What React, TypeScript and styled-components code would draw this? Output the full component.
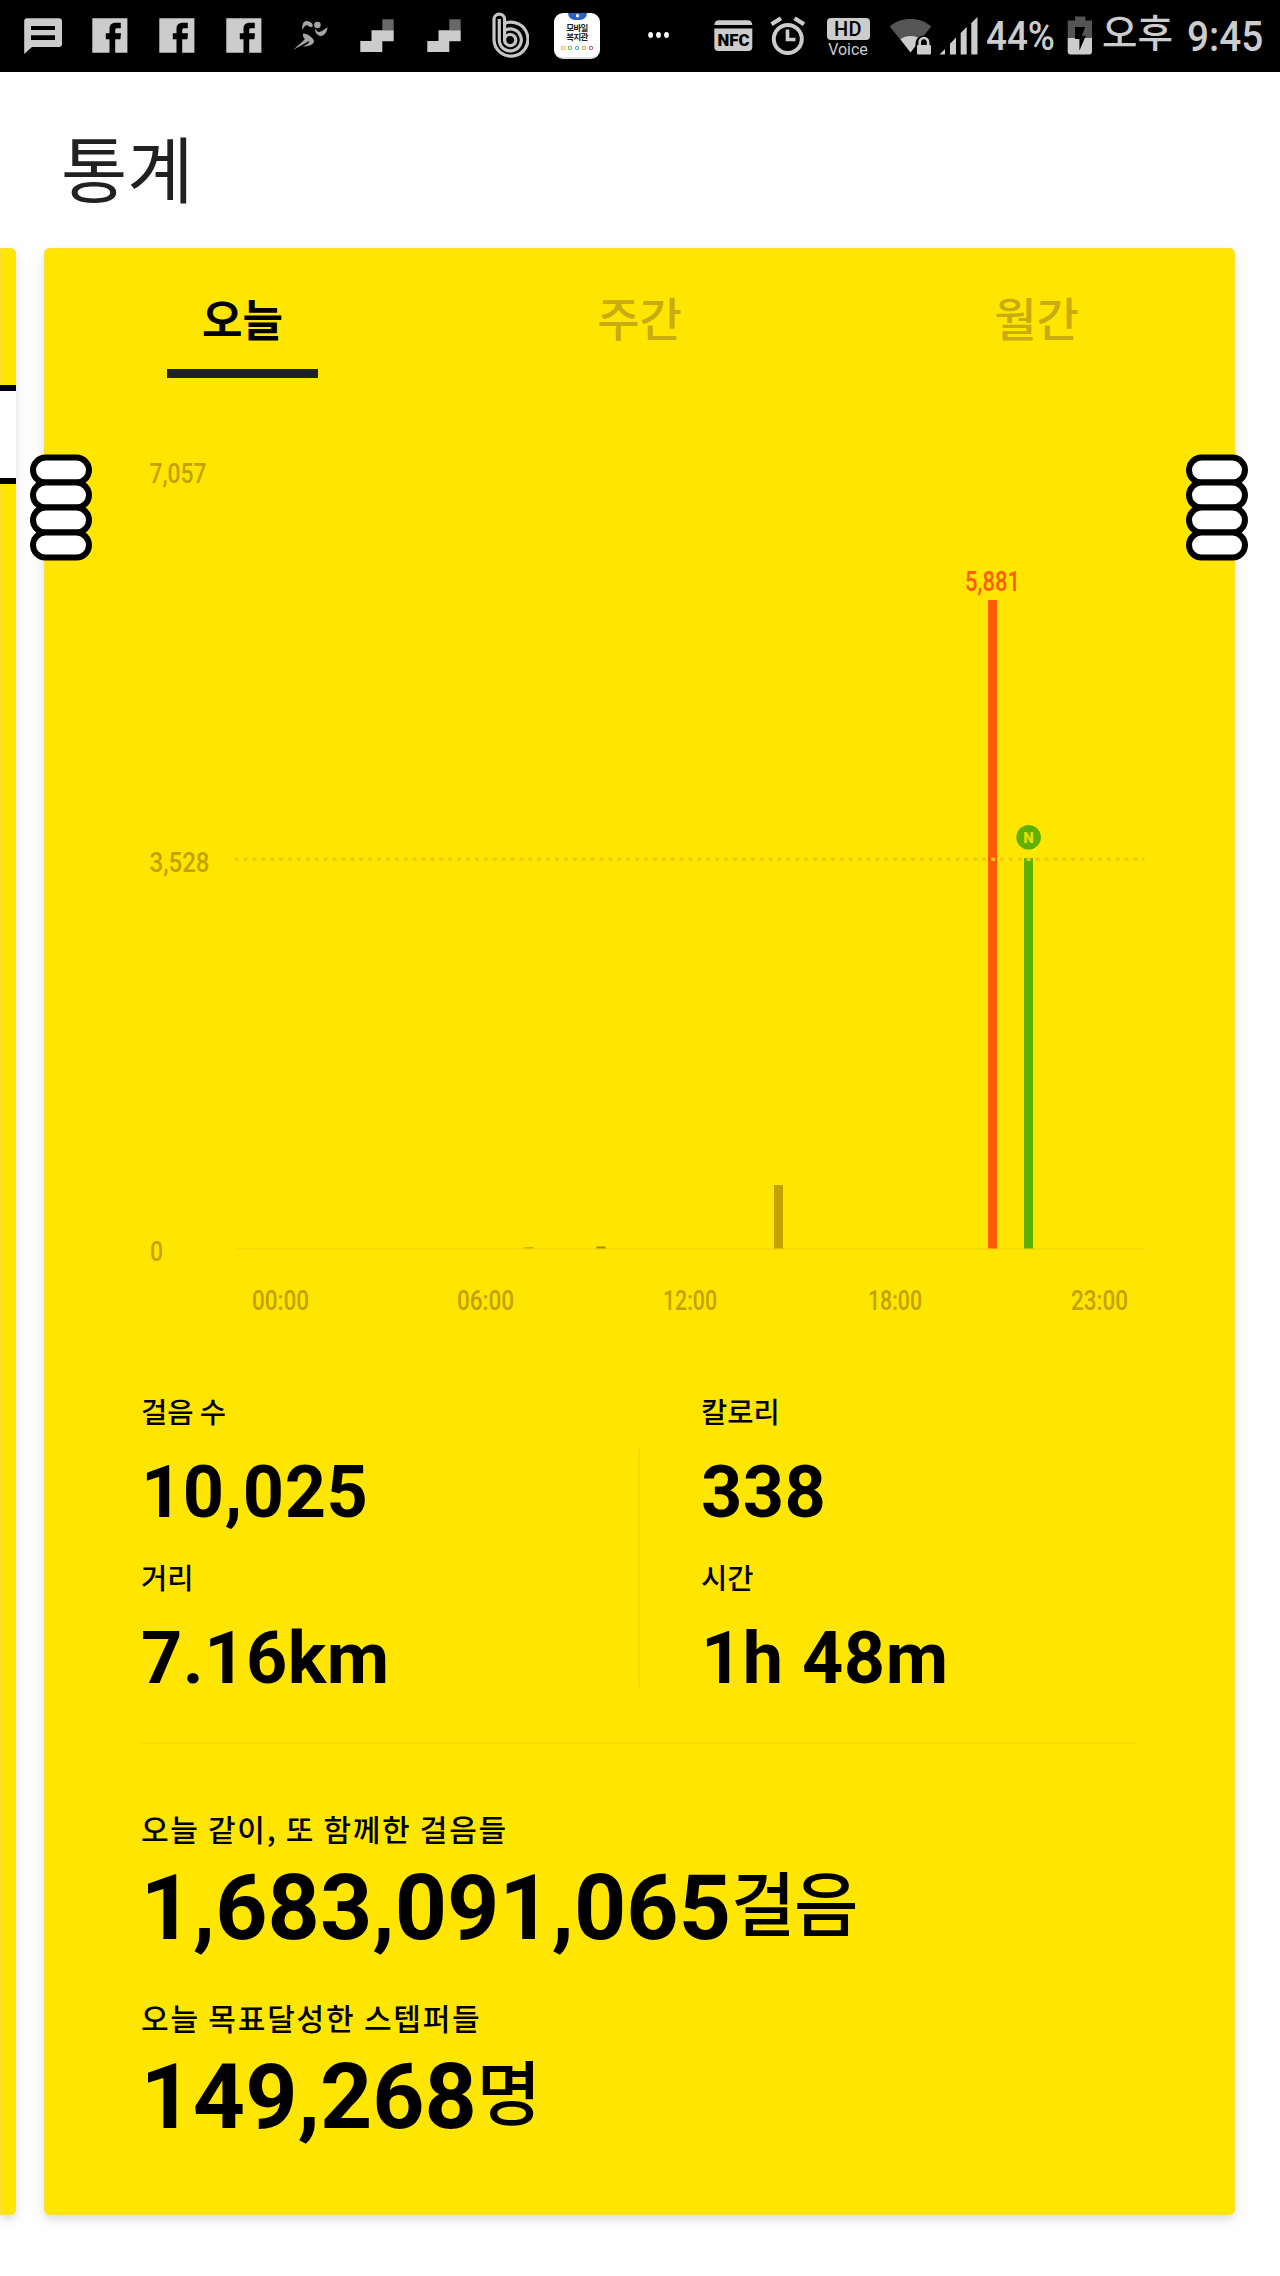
import React from 'react';
import styled, { createGlobalStyle } from 'styled-components';

const KR = '"Noto Sans CJK KR", sans-serif';
const LATIN = 'Roboto, "Noto Sans CJK KR", sans-serif';
const YELLOW = '#ffe600';
const OCHRE = '#c3a100';
const SILVER = '#cccccc';

const GlobalStyle = createGlobalStyle`
  html, body { margin: 0; padding: 0; background: #fefefe; }
  * { box-sizing: border-box; }
`;

const Page = styled.div`
  width: 1280px;
  height: 2276px;
  display: flex;
  flex-direction: column;
  overflow: hidden;
  background: #fefefe;
  font-family: ${KR};
  color: #000;
`;

const StatusBar = styled.header`
  height: 72px;
  flex: none;
  display: flex;
  align-items: flex-start;
  background: #000;
  color: ${SILVER};
`;

const Icon = styled.svg<{ $gap: number }>`
  display: block;
  flex: none;
  margin-left: ${(p) => p.$gap}px;
`;

const StatusText = styled.span<{ $gap: number; $w: number; $size: number; $squeeze: number; $top: number }>`
  flex: none;
  width: ${(p) => p.$w}px;
  margin-left: ${(p) => p.$gap}px;
  padding-top: ${(p) => p.$top}px;
  font: 500 ${(p) => p.$size}px/50px ${LATIN};
  white-space: nowrap;
  transform: scaleX(${(p) => p.$squeeze});
  transform-origin: left;
`;

const AppBadge = styled.div`
  flex: none;
  width: 46px;
  height: 46px;
  margin: 13px 0 0 25px;
  border-radius: 9px;
  overflow: hidden;
  display: flex;
  flex-direction: column;
  align-items: center;
  background: #fff;
  border-bottom: 2px solid #ddd;
`;

const BadgeDome = styled.i`
  width: 19px;
  height: 7px;
  margin-bottom: 3px;
  border-radius: 0 0 10px 10px;
  background: radial-gradient(circle at 50% 40%, #fff 0 1.3px, #2a63c4 2px);
`;

const BadgeText = styled.b`
  height: 9px;
  font: 700 8.5px/9px ${KR};
  letter-spacing: -0.6px;
  white-space: nowrap;
  color: #222;
`;

const BadgeDots = styled.span`
  display: flex;
  gap: 3px;
  margin-top: 5px;
`;

const BadgeDot = styled.i<{ $c: string }>`
  width: 4px;
  height: 4px;
  border: 1.3px solid ${(p) => p.$c};
  border-radius: 1px;
`;

const VoiceBox = styled.div`
  flex: none;
  width: 43px;
  margin: 18px 0 0 21px;
  display: flex;
  flex-direction: column;
  align-items: center;
`;

const HdPlate = styled.span`
  width: 43px;
  height: 22px;
  border-radius: 4px;
  background: ${SILVER};
  color: #000;
  text-align: center;
  font: 500 20px/22px ${LATIN};
  letter-spacing: 0.5px;
`;

const VoiceWord = styled.span`
  font: 400 16px/19px ${LATIN};
`;

const TitleBar = styled.div`
  height: 176px;
  flex: none;
  padding: 44px 0 0 61px;
`;

const Title = styled.h1`
  margin: 0;
  font: 400 72px/100px ${KR};
  color: #212121;
`;

const Deck = styled.div`
  position: relative;
  display: flex;
  gap: 28px;
`;

const Card = styled.section`
  width: 1191px;
  height: 1967px;
  flex: none;
  border-radius: 6px;
  background: ${YELLOW};
  box-shadow: inset 0 0 0 1px #ffdc38, 0 4px 10px rgba(0, 0, 0, 0.14);
  display: flex;
  flex-direction: column;
`;

const PreviousCard = styled(Card)`
  width: 16px;
  border-radius: 0 6px 6px 0;
  padding-top: 136.5px;
`;

const PreviousField = styled.div`
  height: 99px;
  border: solid #000;
  border-width: 6px 0;
  background: #fff;
`;

const Tabs = styled.nav`
  height: 130px;
  display: grid;
  grid-template-columns: repeat(3, 1fr);
  justify-items: center;
`;

const Tab = styled.div<{ $active?: boolean }>`
  width: 151px;
  height: 130px;
  padding-top: ${(p) => (p.$active ? 37 : 35)}px;
  text-align: center;
  font: ${(p) => (p.$active ? '700 44px' : '500 46px')}/66px ${KR};
  color: ${(p) => (p.$active ? '#000' : '#c9ab12')};
  border-bottom: 9px solid ${(p) => (p.$active ? '#212121' : 'transparent')};
`;

const Chart = styled.svg`
  display: block;
  flex: none;
`;

const Stats = styled.div`
  margin: 36px 0 0 97px;
  height: 363px;
  width: 996px;
  display: flex;
  border-bottom: 2px solid #f5da06;
`;

const StatColumn = styled.div<{ $w: number }>`
  width: ${(p) => p.$w}px;
`;

const ColumnRule = styled.div`
  width: 2px;
  height: 238px;
  margin: 68px 61px 0 2px;
  background: #f5da06;
`;

const Label = styled.div<{ $spacing?: number; $size?: number }>`
  height: 60px;
  font: 500 ${(p) => p.$size ?? 30}px/60px ${KR};
  letter-spacing: ${(p) => p.$spacing ?? 0}px;
  white-space: nowrap;
`;

const Value = styled.div`
  height: 105.5px;
  padding-top: 5px;
  font: 700 72px/94px ${LATIN};
  letter-spacing: 0.5px;
  white-space: nowrap;
`;

const Totals = styled.div`
  margin: 54px 0 0 97px;
`;

const Total = styled.div`
  height: 188.5px;
`;

const BigValue = styled.div`
  font: 700 91.2px/94px ${LATIN};
  white-space: nowrap;
  display: flex;
  margin: 3px 0 0 -0.5px;
`;

const Unit = styled.span`
  font: 500 70px/80px ${KR};
  letter-spacing: -1.5px;
`;

const Handle = styled.svg<{ $side: 'left' | 'right' }>`
  position: absolute;
  top: 206px;
  left: ${(p) => (p.$side === 'left' ? 30 : 1186)}px;
`;

const Rings = ({ side }: { side: 'left' | 'right' }) => (
  <Handle $side={side} width="62" height="108" viewBox="0 0 62 108">
    {[0, 25, 50, 75].map((y) => (
      <rect key={y} x="3" y={y + 3.6} width="56" height="25" rx="12.5" fill="#fff" stroke="#000" strokeWidth="6" />
    ))}
  </Handle>
);

const Facebook = ({ gap }: { gap: number }) => (
  <Icon $gap={gap} width="36" height="72" viewBox="0 0 36 72">
    <path fill={SILVER} d="M0.3 18.3H35.4V52.7H23.2V39.2H28.4L29 33.2H23.2V30.2C23.2 28.6 23.8 28.2 25.2 28.2H28.8V22.8H24C19.2 22.8 17.5 25.2 17.5 29.2V33.2H13.8V39.2H17.5V52.7H0.3Z" />
  </Icon>
);

const Steps = ({ gap }: { gap: number }) => (
  <Icon $gap={gap} width="34" height="72" viewBox="0 0 34 72">
    <path fill="#686868" d="M22.3 19.3H33.7V30.3H22.3Z" />
    <path fill={SILVER} d="M11.5 30.3H33.7V41.3H22.3V52H0.3V41H11.5Z" />
  </Icon>
);

const StatusIcons = () => (
  <StatusBar>
    <Icon $gap={24} width="38" height="72" viewBox="0 0 38 72">
      <path fill={SILVER} fillRule="evenodd" d="M3 18.3H35A3 3 0 0 1 38 21.3V44A3 3 0 0 1 35 47H8L0.2 54V21.3A3 3 0 0 1 3 18.3ZM7 26V30H31V26ZM7 35.3V40H31V35.3Z" />
    </Icon>
    <Facebook gap={30} />
    <Facebook gap={31} />
    <Facebook gap={31} />
    <Icon $gap={31} width="36" height="72" viewBox="0 0 36 72" fill="#a6a6a6">
      <circle cx="24.4" cy="25" r="3.3" />
      <path d="M9.5 30C8.3 22.5 12 20.6 14.8 21.2C18 21.5 20.5 24 19.6 26.4C18.6 27.8 16.5 26.8 15 25.4C12.5 24.5 11.3 26 9.5 30Z" />
      <path d="M22.2 28.8C24 31.5 25.3 32.4 27.2 31.8C30.2 30.7 32.5 28 34.6 27.5C34 32 31.5 35.2 28.5 36C24.8 36.5 21.3 32 22.2 28.8Z" />
      <path d="M10.2 33.5C14 33.2 20.8 38 21 41.2C20.7 44.8 15 46.7 9.8 46.6C13 45 16 43.5 16.3 41C12.5 43 5 47 0 50.3C3.5 46.5 9 42.5 11.8 39.2C10.3 37.5 9.5 35.5 10.2 33.5Z" />
    </Icon>
    <Steps gap={31} />
    <Steps gap={33} />
    <Icon $gap={31} width="37" height="72" viewBox="492 0 37 72" fill="none" stroke="#c6c6c6" strokeWidth="3.2">
      <path d="M494 40V19.5a5.3 5.3 0 0 1 10.6 0V23.4A17 17 0 1 1 494 40Z" />
      <path d="M499.3 19V40A11 11 0 1 0 504.6 30.5" />
      <path d="M504.6 23V40A5.6 5.6 0 1 0 510.2 34.5C507.5 34.5 504.6 36.5 504.6 40" />
    </Icon>
    <AppBadge>
      <BadgeDome />
      <BadgeText>모바일</BadgeText>
      <BadgeText>복지관</BadgeText>
      <BadgeDots>
        {['#f3b53b', '#6cc04a', '#3db8c8', '#f39a3b', '#ea4b6a'].map((c) => (
          <BadgeDot key={c} $c={c} />
        ))}
      </BadgeDots>
    </AppBadge>
    <Icon $gap={46.5} width="23" height="72" viewBox="0 0 23 72" fill="#fff">
      <ellipse cx="3.6" cy="35" rx="2.4" ry="3" />
      <ellipse cx="11.5" cy="35" rx="2.4" ry="3" />
      <ellipse cx="19.5" cy="35" rx="2.4" ry="3" />
    </Icon>
    <Icon $gap={44} width="39" height="72" viewBox="0 0 39 72">
      <path fill={SILVER} d="M5 20.3H33.6Q38 20.3 38.3 25H0.3Q0.6 20.3 5 20.3Z" />
      <path fill={SILVER} d="M0.3 28.6H38.3V47A4 4 0 0 1 34.3 51H4.3A4 4 0 0 1 0.3 47Z" />
      <text x="3.5" y="45.8" textLength="32" lengthAdjust="spacingAndGlyphs" fontFamily="Roboto" fontWeight="900" fontSize="16.5" fill="#000">NFC</text>
    </Icon>
    <Icon $gap={17} width="36" height="72" viewBox="770 0 36 72" fill="none" stroke={SILVER}>
      <circle cx="787.8" cy="39" r="14" strokeWidth="4" />
      <path d="M787.5 29.5V39.5H795.5" strokeWidth="3.6" />
      <path d="M771.5 24.2L781 18.2M804 24.2L794.5 18.2" strokeWidth="4.2" />
    </Icon>
    <VoiceBox>
      <HdPlate>HD</HdPlate>
      <VoiceWord>Voice</VoiceWord>
    </VoiceBox>
    <Icon $gap={19} width="44" height="72" viewBox="889 0 44 72">
      <path fill="#555" d="M889.7 26.4C901 16.6 920 16.6 931.2 26.4L910.5 52Z" />
      <path fill={SILVER} d="M900.4 39.3C905.5 34.8 915.5 34.8 920.6 39.3L910.5 52.5Z" />
      <path fill="#000" d="M915.5 43.5C915.5 33 932.5 33 932.5 43.5V56H915.5Z" />
      <rect x="917" y="45" width="14" height="9.6" rx="1" fill={SILVER} />
      <path d="M919.7 46V42.2a4.2 4.2 0 0 1 8.4 0V46" fill="none" stroke={SILVER} strokeWidth="2.6" />
    </Icon>
    <Icon $gap={6} width="39" height="72" viewBox="939 0 39 72" fill={SILVER}>
      <path d="M939.5 54.5L945 49V54.5ZM950 54.5V43.7L956 37.6V54.5ZM960.7 54.5V33L966.7 27V54.5ZM971.3 54.5V23L977.5 17V54.5Z" />
    </Icon>
    <StatusText $gap={8} $w={66} $size={40} $squeeze={0.92} $top={12}>44%</StatusText>
    <Icon $gap={15.5} width="26" height="72" viewBox="0 0 26 72">
      <path fill="#555" d="M8 16.5H18.3V20.5H25V38H0.7V20.5H8Z" />
      <path fill={SILVER} d="M0.7 38H25V51.5a3 3 0 0 1-3 3H3.7a3 3 0 0 1-3-3Z" />
      <path fill="#000" d="M8 27H18.2L14.8 35.7H18.8L12.4 50.8V39H8Z" />
    </Icon>
    <StatusText $gap={9} $w={70} $size={38.5} $squeeze={1} $top={9}>오후</StatusText>
    <StatusText $gap={14.5} $w={76} $size={43} $squeeze={0.9} $top={11}>9:45</StatusText>
  </StatusBar>
);

type Bar = { x: number; top: number; color: string };

const bars: Bar[] = [
  { x: 524.5, top: 1247, color: '#cfae00' },
  { x: 596.5, top: 1246.5, color: '#a98d00' },
  { x: 774, top: 1185, color: OCHRE },
  { x: 988, top: 600, color: '#ff5a00' },
  { x: 1024, top: 858, color: '#60b000' },
];

const chartTexts = [
  { t: '7,057', x: 149.5, y: 483, w: 57 },
  { t: '3,528', x: 149.5, y: 872, w: 60 },
  { t: '0', x: 150, y: 1261, w: 13 },
  { t: '00:00', x: 252, y: 1310, w: 57 },
  { t: '06:00', x: 457, y: 1310, w: 57 },
  { t: '12:00', x: 663, y: 1310, w: 54 },
  { t: '18:00', x: 868, y: 1310, w: 54 },
  { t: '23:00', x: 1071, y: 1310, w: 57 },
];

const StepChart = () => (
  <Chart width="1191" height="967" viewBox="44 378 1191 967" fontFamily="Roboto" fontSize="28">
    <path d="M236 1249H1145" stroke="#f5da06" strokeWidth="2" />
    {bars.map((b) => (
      <rect key={b.x} x={b.x} y={b.top} width="9" height={1248.5 - b.top} fill={b.color} />
    ))}
    <path d="M234.6 859.3H1144.5" stroke="#edcd0a" strokeWidth="3.6" strokeDasharray="4 4.9" />
    {chartTexts.map((c) => (
      <text key={c.t} x={c.x} y={c.y} textLength={c.w} lengthAdjust="spacingAndGlyphs" fontWeight="500" fill={OCHRE}>
        {c.t}
      </text>
    ))}
    <text x="965" y="591" textLength="55" lengthAdjust="spacingAndGlyphs" fontWeight="500" fill="#ff5a00">5,881</text>
    <circle cx="1028.6" cy="837.3" r="12.3" fill="#60b000" />
    <text x="1028.6" y="842.7" textAnchor="middle" fontSize="15" fontWeight="900" fill="#e8de00">N</text>
  </Chart>
);

export default function App() {
  return (
    <Page>
      <GlobalStyle />
      <StatusIcons />
      <TitleBar>
        <Title>통계</Title>
      </TitleBar>
      <Deck>
        <PreviousCard>
          <PreviousField />
        </PreviousCard>
        <Card>
          <Tabs>
            <Tab $active>오늘</Tab>
            <Tab>주간</Tab>
            <Tab>월간</Tab>
          </Tabs>
          <StepChart />
          <Stats>
            <StatColumn $w={495}>
              <Label $size={28.5}>걸음 수</Label>
              <Value>10,025</Value>
              <Label $size={28.5}>거리</Label>
              <Value>7.16km</Value>
            </StatColumn>
            <ColumnRule />
            <StatColumn $w={400}>
              <Label $size={28.5}>칼로리</Label>
              <Value>338</Value>
              <Label $size={28.5}>시간</Label>
              <Value>1h 48m</Value>
            </StatColumn>
          </Stats>
          <Totals>
            <Total>
              <Label $spacing={1.7}>오늘 같이, 또 함께한 걸음들</Label>
              <BigValue>1,683,091,065<Unit>걸음</Unit></BigValue>
            </Total>
            <Total>
              <Label $spacing={1.8}>오늘 목표달성한 스텝퍼들</Label>
              <BigValue>149,268<Unit>명</Unit></BigValue>
            </Total>
          </Totals>
        </Card>
        <Rings side="left" />
        <Rings side="right" />
      </Deck>
    </Page>
  );
}
